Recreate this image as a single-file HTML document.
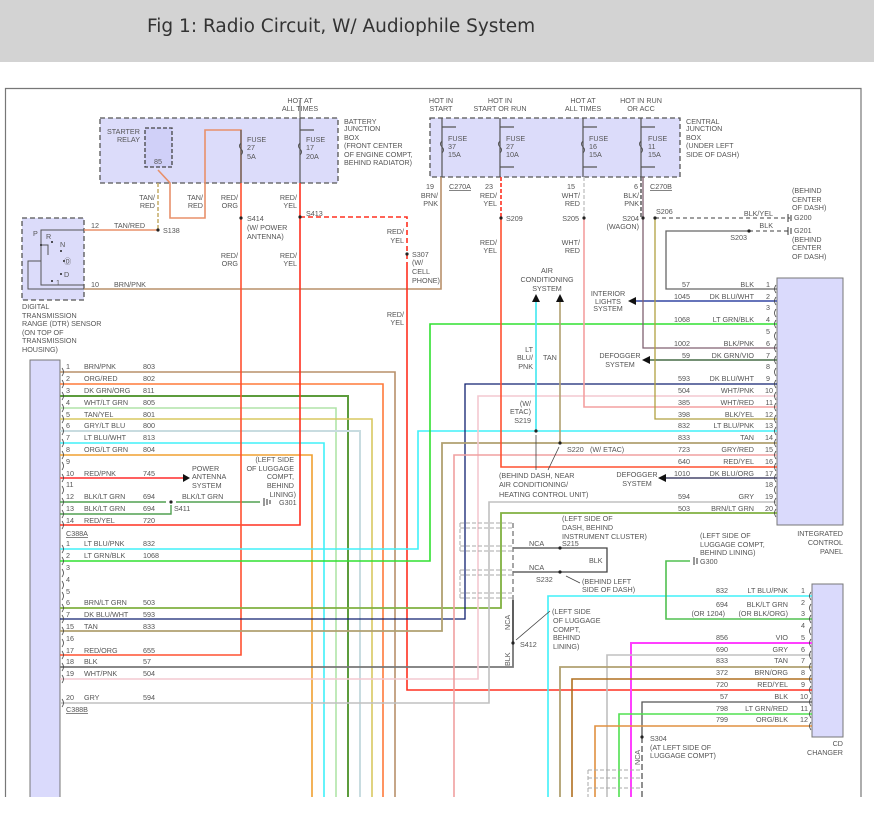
<!DOCTYPE html>
<html><head><meta charset="utf-8"><style>
html,body{margin:0;padding:0;background:#fff;width:874px;height:813px;overflow:hidden}
.hd{position:absolute;left:0;top:0;width:874px;height:62px;background:#d3d3d3}
.hd span{position:absolute;left:147px;top:16px;font:18.5px "DejaVu Sans","Liberation Sans",sans-serif;color:#333}
svg{position:absolute;left:0;top:0}
text{font-family:"Liberation Sans",sans-serif;font-size:7.2px;fill:#555}
.r{text-anchor:end}.m{text-anchor:middle}
</style></head><body>
<div class="hd"><span>Fig 1: Radio Circuit, W/ Audiophile System</span></div>
<svg width="874" height="813" viewBox="0 0 874 813">
<g fill="none" stroke-width="1.6">
<path d="M5.5,797V88.5H861V797" stroke="#777" stroke-width="1.2"/>
<rect x="100" y="118" width="238" height="65" fill="#dcdcfa" stroke="#555" stroke-dasharray="5,3" stroke-width="1.3"/>
<rect x="145" y="128" width="27" height="39" fill="#d0d0f8" stroke="#444" stroke-dasharray="4,2" stroke-width="1.3"/>
<rect x="430" y="118" width="250" height="59" fill="#dcdcfa" stroke="#555" stroke-dasharray="5,3" stroke-width="1.3"/>
<rect x="22" y="218" width="62" height="82" fill="#dcdcfa" stroke="#555" stroke-dasharray="5,3" stroke-width="1.3"/>
<path d="M30,797V360H60V797" fill="#dadafc" stroke="#777" stroke-width="1"/>
<rect x="777" y="278" width="66" height="247" fill="#dadafc" stroke="#777" stroke-width="1"/>
<rect x="812" y="584" width="31" height="153" fill="#dadafc" stroke="#777" stroke-width="1"/>
<path d="M84,230H41V285H84M84,289H28V261H41M41,245H48V255" stroke="#555" stroke-width="1"/>
<path d="M241,183V130H205V218H170V183L158,170" stroke="#e8906a" stroke-width="1.6"/>
<path d="M241,130V183M300,118V183M300,130H314" stroke="#555" stroke-width="1.2"/>
<path d="M241,143q-3,3 0,6q3,3 0,6M300,143q-3,3 0,6q3,3 0,6" stroke="#555" stroke-width="1"/>
<path d="M300,100V118" stroke="#555" stroke-width="1"/>
<path d="M442,118V177M500,118V177M583,118V177M641,118V177M442,127H456M500,127H514M583,127H597M641,127H655M500,167H514M583,167H597M641,167H655" stroke="#555" stroke-width="1.2"/>
<path d="M442,141q-3,3 0,6q3,3 0,6M500,141q-3,3 0,6q3,3 0,6M583,141q-3,3 0,6q3,3 0,6M641,141q-3,3 0,6q3,3 0,6" stroke="#555" stroke-width="1"/>
<path d="M158,183V230" stroke="#c8b070" stroke-dasharray="4,2"/>
<path d="M84,230H158" stroke="#e8906a"/>
<path d="M441,177V289H84" stroke="#b8906a"/>
<path d="M60,372H395V797" stroke="#b8906a"/>
<path d="M60,384H383V797" stroke="#ff7a3a"/>
<path d="M60,396H348V797" stroke="#5c9c3c" stroke-width="2"/>
<path d="M60,408H336V797" stroke="#b0e4a8"/>
<path d="M60,419H372V797" stroke="#d8c860"/>
<path d="M60,431H360V797" stroke="#c8dce0" stroke-width="2"/>
<path d="M60,443H324V797" stroke="#40f0f8"/>
<path d="M60,455H312V797" stroke="#f0a030"/>
<path d="M60,478H183" stroke="#ff6060" stroke-width="2"/>
<path d="M183,474l7,4l-7,4z" fill="#111" stroke="none"/>
<path d="M60,502H166M176,502H260M60,514H171V505" stroke="#50a050" stroke-width="1.4"/>
<path d="M60,525H300V183" stroke="#ff3020"/>
<path d="M241,183V655H60" stroke="#ff5030"/>
<path d="M407,262V690H812" stroke="#ff3020"/>
<path d="M300,217H407V262" stroke="#ff3020" stroke-dasharray="5,3"/>
<path d="M60,549H418V431H777" stroke="#40f0f8"/>
<path d="M60,561H430V324H777" stroke="#30e030"/>
<path d="M60,608H501V513H777" stroke="#80b040" stroke-width="1.8"/>
<path d="M60,619H465V384H777" stroke="#102070" stroke-width="1.3"/>
<path d="M60,631H442V443H777" stroke="#b0a070" stroke-width="1.8"/>
<path d="M60,667H513V600" stroke="#777" stroke-width="1.8"/>
<path d="M60,679H478V396H777" stroke="#f4c8d0"/>
<path d="M60,703H489V502H777" stroke="#c0c0c0"/>
<path d="M777,289H666V231H749" stroke="#666" stroke-width="1.3"/>
<path d="M749,231H790M655,218H790" stroke="#666" stroke-width="1.3" stroke-dasharray="4,3"/>
<path d="M777,301H634" stroke="#5060b0" stroke-width="1.8"/>
<path d="M636,297l-8,4l8,4z" fill="#111" stroke="none"/>
<path d="M777,348H643V177" stroke="#806070" stroke-width="1.3"/>
<path d="M777,360H648" stroke="#608060" stroke-width="1.8"/>
<path d="M650,356l-8,4l8,4z" fill="#111" stroke="none"/>
<path d="M777,407H584V218" stroke="#f4a0a0"/>
<path d="M584,177V218" stroke="#ccc" stroke-dasharray="4,2"/>
<path d="M777,419H655V218" stroke="#b0a040" stroke-width="1.3"/>
<path d="M777,455H454V797" stroke="#f0a0a0"/>
<path d="M777,467H501V218" stroke="#ff5030"/>
<path d="M501,177V218" stroke="#ff3020" stroke-dasharray="4,2"/>
<path d="M641,177V218" stroke="#666" stroke-dasharray="4,2"/>
<path d="M777,478H664" stroke="#606080" stroke-width="1.8"/>
<path d="M666,474l-8,4l8,4z" fill="#111" stroke="none"/>
<path d="M536,298V431" stroke="#40e8f0"/>
<path d="M560,298V443" stroke="#b0a070"/>
<path d="M532,302l4,-8l4,8zM556,302l4,-8l4,8z" fill="#111" stroke="none"/>
<path d="M536,470V435M548,470L559,447" stroke="#444" stroke-width="0.8"/>
<path d="M812,596H548V797" stroke="#40f0f8"/>
<path d="M812,619H666V561H690" stroke="#50c050"/>
<path d="M812,643H631V797" stroke="#ff40ff" stroke-width="2"/>
<path d="M812,655H607V797" stroke="#c0c0c0"/>
<path d="M812,667H560V797" stroke="#b0a070" stroke-width="1.8"/>
<path d="M812,679H572V797" stroke="#b07020"/>
<path d="M812,702H642V737" stroke="#555" stroke-width="1.3"/>
<path d="M642,737V797" stroke="#555" stroke-dasharray="6,3" stroke-width="1.3"/>
<path d="M812,714H619V797" stroke="#50e050"/>
<path d="M812,726H595V797" stroke="#e09040"/>
<path d="M513,548H560M513,572H560M560,548H607V572H560M513,600V643" stroke="#444" stroke-width="1.3"/>
<path d="M513,523V600" stroke="#777" stroke-dasharray="5,3" stroke-width="1.3"/>
<path d="M460,523H512M460,528H512M460,546H512M460,551H512M460,570H512M460,575H512M460,593H512M460,598H512M460,523V551M460,570V598" stroke="#aaa" stroke-dasharray="4,2" stroke-width="1"/>
<path d="M588,770H640M588,778H640M588,788H640M588,770V797" stroke="#aaa" stroke-dasharray="4,2" stroke-width="1"/>
<path d="M516,640L550,611M566,576L580,583" stroke="#444" stroke-width="0.8"/>
<path d="M264,498V506M267,499V505M270,500V504M788,214V222M791,215V221M788,227V235M791,228V234M694,557V565M697,558V564" stroke="#333" stroke-width="1"/>
<g stroke="#444" stroke-width="0.8">
<path d="M62,368q3,4 0,8M62,380q3,4 0,8M62,392q3,4 0,8M62,404q3,4 0,8M62,415q3,4 0,8M62,427q3,4 0,8M62,439q3,4 0,8M62,451q3,4 0,8M62,462q3,4 0,8M62,474q3,4 0,8M62,486q3,4 0,8M62,498q3,4 0,8M62,510q3,4 0,8M62,521q3,4 0,8M62,545q3,4 0,8M62,557q3,4 0,8M62,569q3,4 0,8M62,581q3,4 0,8M62,592q3,4 0,8M62,604q3,4 0,8M62,615q3,4 0,8M62,627q3,4 0,8M62,639q3,4 0,8M62,651q3,4 0,8M62,663q3,4 0,8M62,675q3,4 0,8M62,699q3,4 0,8"/>
<path d="M776,285q-3,4 0,8M776,297q-3,4 0,8M776,309q-3,4 0,8M776,320q-3,4 0,8M776,332q-3,4 0,8M776,344q-3,4 0,8M776,356q-3,4 0,8M776,368q-3,4 0,8M776,380q-3,4 0,8M776,392q-3,4 0,8M776,403q-3,4 0,8M776,415q-3,4 0,8M776,427q-3,4 0,8M776,439q-3,4 0,8M776,451q-3,4 0,8M776,463q-3,4 0,8M776,474q-3,4 0,8M776,486q-3,4 0,8M776,498q-3,4 0,8M776,509q-3,4 0,8"/>
<path d="M811,592q-3,4 0,8M811,604q-3,4 0,8M811,615q-3,4 0,8M811,627q-3,4 0,8M811,639q-3,4 0,8M811,651q-3,4 0,8M811,663q-3,4 0,8M811,675q-3,4 0,8M811,686q-3,4 0,8M811,698q-3,4 0,8M811,710q-3,4 0,8M811,722q-3,4 0,8"/>
</g>
</g>
<g fill="#222">
<circle cx="158" cy="230" r="1.6"/><circle cx="241" cy="218" r="1.6"/><circle cx="300" cy="217" r="1.6"/><circle cx="407" cy="254" r="1.6"/>
<circle cx="501" cy="218" r="1.6"/><circle cx="584" cy="218" r="1.6"/><circle cx="643" cy="218" r="1.6"/><circle cx="655" cy="218" r="1.6"/><circle cx="749" cy="231" r="1.6"/>
<circle cx="171" cy="502" r="1.6"/><circle cx="536" cy="431" r="1.6"/><circle cx="560" cy="443" r="1.6"/>
<circle cx="560" cy="548" r="1.6"/><circle cx="560" cy="572" r="1.6"/><circle cx="513" cy="643" r="1.6"/><circle cx="642" cy="737" r="1.6"/>
<circle cx="41" cy="245" r="1"/><circle cx="52" cy="242" r="1"/><circle cx="61" cy="251" r="1"/><circle cx="64" cy="261" r="1"/><circle cx="61" cy="274" r="1"/><circle cx="52" cy="281" r="1"/>
</g>
<text x="300" y="103" class="m">HOT AT</text><text x="300" y="111" class="m">ALL TIMES</text>
<text x="107" y="134">STARTER</text><text x="140" y="142" class="r">RELAY</text><text x="158" y="164" class="m">85</text>
<text x="247" y="142">FUSE</text><text x="247" y="150">27</text><text x="247" y="159">5A</text>
<text x="306" y="142">FUSE</text><text x="306" y="150">17</text><text x="306" y="159">20A</text>
<text x="344" y="124">BATTERY</text><text x="344" y="131">JUNCTION</text><text x="344" y="140">BOX</text><text x="344" y="148">(FRONT CENTER</text><text x="344" y="157">OF ENGINE COMPT,</text><text x="344" y="165">BEHIND RADIATOR)</text>
<text x="441" y="103" class="m">HOT IN</text><text x="441" y="111" class="m">START</text>
<text x="500" y="103" class="m">HOT IN</text><text x="500" y="111" class="m">START OR RUN</text>
<text x="583" y="103" class="m">HOT AT</text><text x="583" y="111" class="m">ALL TIMES</text>
<text x="641" y="103" class="m">HOT IN RUN</text><text x="641" y="111" class="m">OR ACC</text>
<text x="448" y="141">FUSE</text><text x="448" y="149">37</text><text x="448" y="157">15A</text>
<text x="506" y="141">FUSE</text><text x="506" y="149">27</text><text x="506" y="157">10A</text>
<text x="589" y="141">FUSE</text><text x="589" y="149">16</text><text x="589" y="157">15A</text>
<text x="648" y="141">FUSE</text><text x="648" y="149">11</text><text x="648" y="157">15A</text>
<text x="686" y="124">CENTRAL</text><text x="686" y="131">JUNCTION</text><text x="686" y="140">BOX</text><text x="686" y="148">(UNDER LEFT</text><text x="686" y="157">SIDE OF DASH)</text>
<text x="434" y="189" class="r">19</text><text x="449" y="189" text-decoration="underline">C270A</text><text x="493" y="189" class="r">23</text><text x="575" y="189" class="r">15</text><text x="638" y="189" class="r">6</text><text x="650" y="189" text-decoration="underline">C270B</text>
<text x="438" y="198" class="r">BRN/</text><text x="438" y="206" class="r">PNK</text><text x="497" y="198" class="r">RED/</text><text x="497" y="206" class="r">YEL</text>
<text x="580" y="198" class="r">WHT/</text><text x="580" y="206" class="r">RED</text><text x="639" y="198" class="r">BLK/</text><text x="639" y="206" class="r">PNK</text>
<text x="506" y="221">S209</text><text x="579" y="221" class="r">S205</text><text x="639" y="221" class="r">S204</text><text x="639" y="229" class="r">(WAGON)</text><text x="656" y="214">S206</text>
<text x="773" y="216" class="r">BLK/YEL</text><text x="773" y="228" class="r">BLK</text><text x="747" y="240" class="r">S203</text>
<text x="792" y="193">(BEHIND</text><text x="792" y="202">CENTER</text><text x="792" y="210">OF DASH)</text><text x="794" y="220">G200</text><text x="794" y="233">G201</text><text x="792" y="242">(BEHIND</text><text x="792" y="250">CENTER</text><text x="792" y="259">OF DASH)</text>
<text x="497" y="245" class="r">RED/</text><text x="497" y="253" class="r">YEL</text><text x="580" y="245" class="r">WHT/</text><text x="580" y="253" class="r">RED</text>
<text x="547" y="273" class="m">AIR</text><text x="547" y="282" class="m">CONDITIONING</text><text x="547" y="291" class="m">SYSTEM</text>
<text x="608" y="296" class="m">INTERIOR</text><text x="608" y="304" class="m">LIGHTS</text><text x="608" y="311" class="m">SYSTEM</text>
<text x="533" y="352" class="r">LT</text><text x="533" y="360" class="r">BLU/</text><text x="533" y="369" class="r">PNK</text><text x="543" y="360">TAN</text>
<text x="620" y="358" class="m">DEFOGGER</text><text x="620" y="367" class="m">SYSTEM</text>
<text x="531" y="406" class="r">(W/</text><text x="531" y="414" class="r">ETAC)</text><text x="531" y="423" class="r">S219</text>
<text x="567" y="452">S220</text><text x="590" y="452">(W/ ETAC)</text>
<text x="499" y="478">(BEHIND DASH, NEAR</text><text x="499" y="487">AIR CONDITIONING/</text><text x="499" y="497">HEATING CONTROL UNIT)</text>
<text x="637" y="477" class="m">DEFOGGER</text><text x="637" y="486" class="m">SYSTEM</text>
<g>
<text x="690" y="287" class="r">57</text><text x="754" y="287" class="r">BLK</text><text x="770" y="287" class="r">1</text>
<text x="690" y="299" class="r">1045</text><text x="754" y="299" class="r">DK BLU/WHT</text><text x="770" y="299" class="r">2</text>
<text x="770" y="310" class="r">3</text>
<text x="690" y="322" class="r">1068</text><text x="754" y="322" class="r">LT GRN/BLK</text><text x="770" y="322" class="r">4</text>
<text x="770" y="334" class="r">5</text>
<text x="690" y="346" class="r">1002</text><text x="754" y="346" class="r">BLK/PNK</text><text x="770" y="346" class="r">6</text>
<text x="690" y="358" class="r">59</text><text x="754" y="358" class="r">DK GRN/VIO</text><text x="770" y="358" class="r">7</text>
<text x="770" y="369" class="r">8</text>
<text x="690" y="381" class="r">593</text><text x="754" y="381" class="r">DK BLU/WHT</text><text x="770" y="381" class="r">9</text>
<text x="690" y="393" class="r">504</text><text x="754" y="393" class="r">WHT/PNK</text><text x="773" y="393" class="r">10</text>
<text x="690" y="405" class="r">385</text><text x="754" y="405" class="r">WHT/RED</text><text x="773" y="405" class="r">11</text>
<text x="690" y="417" class="r">398</text><text x="754" y="417" class="r">BLK/YEL</text><text x="773" y="417" class="r">12</text>
<text x="690" y="428" class="r">832</text><text x="754" y="428" class="r">LT BLU/PNK</text><text x="773" y="428" class="r">13</text>
<text x="690" y="440" class="r">833</text><text x="754" y="440" class="r">TAN</text><text x="773" y="440" class="r">14</text>
<text x="690" y="452" class="r">723</text><text x="754" y="452" class="r">GRY/RED</text><text x="773" y="452" class="r">15</text>
<text x="690" y="464" class="r">640</text><text x="754" y="464" class="r">RED/YEL</text><text x="773" y="464" class="r">16</text>
<text x="690" y="476" class="r">1010</text><text x="754" y="476" class="r">DK BLU/ORG</text><text x="773" y="476" class="r">17</text>
<text x="773" y="487" class="r">18</text>
<text x="690" y="499" class="r">594</text><text x="754" y="499" class="r">GRY</text><text x="773" y="499" class="r">19</text>
<text x="690" y="511" class="r">503</text><text x="754" y="511" class="r">BRN/LT GRN</text><text x="773" y="511" class="r">20</text>
</g>
<text x="843" y="536" class="r">INTEGRATED</text><text x="843" y="545" class="r">CONTROL</text><text x="843" y="554" class="r">PANEL</text>
<text x="562" y="521">(LEFT SIDE OF</text><text x="562" y="530">DASH, BEHIND</text><text x="562" y="539">INSTRUMENT CLUSTER)</text><text x="562" y="546">S215</text>
<text x="529" y="546">NCA</text><text x="529" y="570">NCA</text><text x="536" y="582">S232</text><text x="589" y="563">BLK</text>
<text x="582" y="584">(BEHIND LEFT</text><text x="582" y="592">SIDE OF DASH)</text>
<text x="700" y="538">(LEFT SIDE OF</text><text x="700" y="547">LUGGAGE COMPT,</text><text x="700" y="555">BEHIND LINING)</text><text x="700" y="564">G300</text>
<text x="552" y="614">(LEFT SIDE</text><text x="553" y="623">OF LUGGAGE</text><text x="553" y="632">COMPT,</text><text x="553" y="640">BEHIND</text><text x="553" y="649">LINING)</text><text x="520" y="647">S412</text>
<text x="0" y="0" transform="translate(510,630) rotate(-90)">NCA</text><text x="0" y="0" transform="translate(510,666) rotate(-90)">BLK</text>
<text x="0" y="0" transform="translate(640,765) rotate(-90)">NCA</text>
<text x="728" y="593" class="r">832</text><text x="788" y="593" class="r">LT BLU/PNK</text><text x="805" y="593" class="r">1</text>
<text x="728" y="607" class="r">694</text><text x="788" y="607" class="r">BLK/LT GRN</text><text x="805" y="605" class="r">2</text>
<text x="725" y="616" class="r">(OR 1204)</text><text x="788" y="616" class="r">(OR BLK/ORG)</text><text x="805" y="616" class="r">3</text>
<text x="805" y="628" class="r">4</text>
<text x="728" y="640" class="r">856</text><text x="788" y="640" class="r">VIO</text><text x="805" y="640" class="r">5</text>
<text x="728" y="652" class="r">690</text><text x="788" y="652" class="r">GRY</text><text x="805" y="652" class="r">6</text>
<text x="728" y="663" class="r">833</text><text x="788" y="663" class="r">TAN</text><text x="805" y="663" class="r">7</text>
<text x="728" y="675" class="r">372</text><text x="788" y="675" class="r">BRN/ORG</text><text x="805" y="675" class="r">8</text>
<text x="728" y="687" class="r">720</text><text x="788" y="687" class="r">RED/YEL</text><text x="805" y="687" class="r">9</text>
<text x="728" y="699" class="r">57</text><text x="788" y="699" class="r">BLK</text><text x="808" y="699" class="r">10</text>
<text x="728" y="711" class="r">798</text><text x="788" y="711" class="r">LT GRN/RED</text><text x="808" y="711" class="r">11</text>
<text x="728" y="722" class="r">799</text><text x="788" y="722" class="r">ORG/BLK</text><text x="808" y="722" class="r">12</text>
<text x="843" y="746" class="r">CD</text><text x="843" y="755" class="r">CHANGER</text>
<text x="650" y="741">S304</text><text x="650" y="750">(AT LEFT SIDE OF</text><text x="650" y="758">LUGGAGE COMPT)</text>
<text x="155" y="200" class="r">TAN/</text><text x="155" y="208" class="r">RED</text><text x="203" y="200" class="r">TAN/</text><text x="203" y="208" class="r">RED</text>
<text x="238" y="200" class="r">RED/</text><text x="238" y="208" class="r">ORG</text><text x="297" y="200" class="r">RED/</text><text x="297" y="208" class="r">YEL</text>
<text x="306" y="216">S413</text><text x="247" y="221">S414</text><text x="247" y="230">(W/ POWER</text><text x="247" y="239">ANTENNA)</text>
<text x="238" y="258" class="r">RED/</text><text x="238" y="266" class="r">ORG</text><text x="297" y="258" class="r">RED/</text><text x="297" y="266" class="r">YEL</text>
<text x="404" y="234" class="r">RED/</text><text x="404" y="243" class="r">YEL</text>
<text x="412" y="257">S307</text><text x="412" y="265">(W/</text><text x="412" y="274">CELL</text><text x="412" y="283">PHONE)</text>
<text x="404" y="317" class="r">RED/</text><text x="404" y="325" class="r">YEL</text>
<text x="91" y="228">12</text><text x="114" y="228">TAN/RED</text><text x="163" y="233">S138</text>
<text x="91" y="287">10</text><text x="114" y="287">BRN/PNK</text>
<text x="33" y="236">P</text><text x="46" y="239">R</text><text x="60" y="247">N</text><text x="64" y="264">Ⓓ</text><text x="64" y="277">D</text><text x="56" y="285">1</text>
<text x="22" y="309">DIGITAL</text><text x="22" y="318">TRANSMISSION</text><text x="22" y="326">RANGE (DTR) SENSOR</text><text x="22" y="335">(ON TOP OF</text><text x="22" y="343">TRANSMISSION</text><text x="22" y="352">HOUSING)</text>
<g>
<text x="66" y="369">1</text><text x="84" y="369">BRN/PNK</text><text x="143" y="369">803</text>
<text x="66" y="381">2</text><text x="84" y="381">ORG/RED</text><text x="143" y="381">802</text>
<text x="66" y="393">3</text><text x="84" y="393">DK GRN/ORG</text><text x="143" y="393">811</text>
<text x="66" y="405">4</text><text x="84" y="405">WHT/LT GRN</text><text x="143" y="405">805</text>
<text x="66" y="417">5</text><text x="84" y="417">TAN/YEL</text><text x="143" y="417">801</text>
<text x="66" y="428">6</text><text x="84" y="428">GRY/LT BLU</text><text x="143" y="428">800</text>
<text x="66" y="440">7</text><text x="84" y="440">LT BLU/WHT</text><text x="143" y="440">813</text>
<text x="66" y="452">8</text><text x="84" y="452">ORG/LT GRN</text><text x="143" y="452">804</text>
<text x="66" y="464">9</text>
<text x="66" y="476">10</text><text x="84" y="476">RED/PNK</text><text x="143" y="476">745</text>
<text x="66" y="487">11</text>
<text x="66" y="499">12</text><text x="84" y="499">BLK/LT GRN</text><text x="143" y="499">694</text>
<text x="66" y="511">13</text><text x="84" y="511">BLK/LT GRN</text><text x="143" y="511">694</text>
<text x="66" y="523">14</text><text x="84" y="523">RED/YEL</text><text x="143" y="523">720</text>
<text x="66" y="536" text-decoration="underline">C388A</text>
<text x="66" y="546">1</text><text x="84" y="546">LT BLU/PNK</text><text x="143" y="546">832</text>
<text x="66" y="558">2</text><text x="84" y="558">LT GRN/BLK</text><text x="143" y="558">1068</text>
<text x="66" y="570">3</text><text x="66" y="582">4</text><text x="66" y="594">5</text>
<text x="66" y="605">6</text><text x="84" y="605">BRN/LT GRN</text><text x="143" y="605">503</text>
<text x="66" y="617">7</text><text x="84" y="617">DK BLU/WHT</text><text x="143" y="617">593</text>
<text x="66" y="629">15</text><text x="84" y="629">TAN</text><text x="143" y="629">833</text>
<text x="66" y="641">16</text>
<text x="66" y="653">17</text><text x="84" y="653">RED/ORG</text><text x="143" y="653">655</text>
<text x="66" y="664">18</text><text x="84" y="664">BLK</text><text x="143" y="664">57</text>
<text x="66" y="676">19</text><text x="84" y="676">WHT/PNK</text><text x="143" y="676">504</text>
<text x="66" y="700">20</text><text x="84" y="700">GRY</text><text x="143" y="700">594</text>
<text x="66" y="712" text-decoration="underline">C388B</text>
</g>
<text x="192" y="471">POWER</text><text x="192" y="479">ANTENNA</text><text x="192" y="488">SYSTEM</text>
<text x="182" y="499">BLK/LT GRN</text><text x="174" y="511">S411</text>
<text x="294" y="462" class="r">(LEFT SIDE</text><text x="294" y="471" class="r">OF LUGGAGE</text><text x="294" y="479" class="r">COMPT,</text><text x="294" y="488" class="r">BEHIND</text><text x="296" y="497" class="r">LINING)</text><text x="279" y="505">G301</text>
</svg>
</body></html>
